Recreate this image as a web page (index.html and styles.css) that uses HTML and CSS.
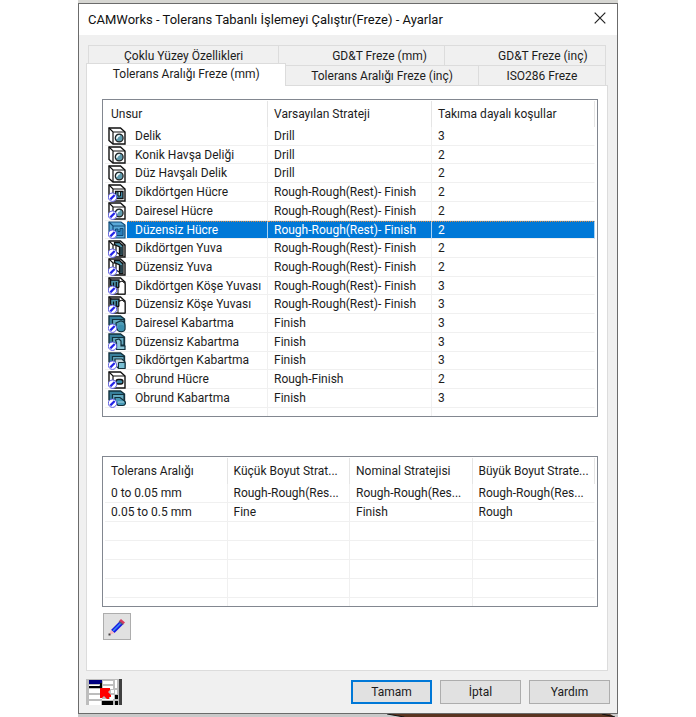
FILE: index.html
```
<!DOCTYPE html>
<html lang="tr">
<head>
<meta charset="utf-8">
<title>CAMWorks - Ayarlar</title>
<link rel="stylesheet" href="styles.css">
</head>
<body>
<svg class="defs" aria-hidden="true">
  <symbol id="box" viewBox="0 0 18 18">
    <path d="M1 1H12.5L17 5V17H5L1 13.5Z" fill="#fff" stroke="#111" stroke-width="1.4"/>
    <path d="M1 1L5 5H17M5 5V17" fill="none" stroke="#111" stroke-width="1.2"/>
  </symbol>
  <symbol id="tag" viewBox="0 0 18 18">
    <circle cx="4.5" cy="13.2" r="4.2" fill="#fff" stroke="#5a5ae0" stroke-width="1"/>
    <path d="M2.3 15.4L6.7 11" stroke="#2323e8" stroke-width="2.2"/>
  </symbol>
  <symbol id="teal" viewBox="0 0 18 18">
    <path d="M1 1H12.5L16.5 4V13H5L1 10Z" fill="#377f9b" stroke="#12303c" stroke-width="1.4"/>
    <path d="M4.5 4.5H16V12H4.5Z" fill="#65aac1" stroke="#12303c" stroke-width="1.2"/>
  </symbol>
  <symbol id="hole" viewBox="0 0 18 18">
    <use href="#box"/>
    <circle cx="11.2" cy="11" r="3.9" fill="#609bad" stroke="#222" stroke-width="1.3"/>
    <path d="M9 11.8A2.5 2.5 0 0 1 11.8 8.8" fill="none" stroke="#f2fafc" stroke-width="1.7"/>
  </symbol>
  <symbol id="rectpocket" viewBox="0 0 18 18">
    <use href="#box"/>
    <path d="M7.5 7.5H15V14.5H7.5Z" fill="#438aa6" stroke="#111" stroke-width="1.3"/>
    <path d="M10 8V12H12.5V8" fill="#b6dbe6" stroke="#111"/>
    <use href="#tag"/>
  </symbol>
  <symbol id="roundpocket" viewBox="0 0 18 18"><use href="#hole"/><use href="#tag"/></symbol>
  <symbol id="irrpocket" viewBox="0 0 18 18">
    <path d="M1 1H13L17 4V17H5L1 13.5Z" fill="#5aa9d8" stroke="#124a76" stroke-width="1.2"/>
    <path d="M1 1L5 5H17M5 5V17" fill="none" stroke="#124a76" stroke-width="1.2"/>
    <path d="M7.5 8H10V10.5H12V7.5H15V14.5H7.5Z" fill="#2a7fbb" stroke="#124a76"/>
    <use href="#tag"/>
  </symbol>
  <symbol id="slot" viewBox="0 0 18 18">
    <use href="#box"/>
    <path d="M6.5 2.5H11.5L15 6V15.5H11.5V7L6.5 4.5Z" fill="#4c91a9" stroke="#111" stroke-width="1.3"/>
    <path d="M8 5.5V12L11 14M13 7V14.5" fill="none" stroke="#111" stroke-width="1.2"/>
    <use href="#tag"/>
  </symbol>
  <symbol id="corner" viewBox="0 0 18 18">
    <use href="#box"/>
    <path d="M2.5 3H11V10.5H5.5L2.5 8Z" fill="#4991aa" stroke="#111" stroke-width="1.4"/>
    <path d="M5.5 5.5V10M8.3 5V10" stroke="#111" stroke-width="1.2"/>
    <path d="M11 5.5L14 4L17 6.5V17H10V10.5H11Z" fill="#fff" stroke="#111"/>
    <use href="#tag"/>
  </symbol>
  <symbol id="roundboss" viewBox="0 0 18 18">
    <use href="#teal"/>
    <path d="M8 8L11 6.5A4 4 0 0 1 17 10V14.5A4 3 0 0 1 10 15.5L8.5 13Z" fill="#4e9cb7" stroke="#12303c" stroke-width="1.2"/>
    <circle cx="13" cy="13" r="3.2" fill="#3b8fae"/>
    <use href="#tag"/>
  </symbol>
  <symbol id="irrboss" viewBox="0 0 18 18">
    <use href="#teal"/>
    <path d="M7.5 7L11 6L13 8V13H17V16.5H8.5V10Z" fill="#8cc6d8" stroke="#12303c" stroke-width="1.2"/>
    <use href="#tag"/>
  </symbol>
  <symbol id="rectboss" viewBox="0 0 18 18">
    <use href="#teal"/>
    <path d="M7 7H14L17 10V16.5H10.5L7 13Z" fill="#c9d7db" stroke="#12303c" stroke-width="1.2"/>
    <path d="M10.5 10.5H17V16.5H10.5Z" fill="#78bed3" stroke="#12303c"/>
    <use href="#tag"/>
  </symbol>
  <symbol id="obpocket" viewBox="0 0 18 18">
    <use href="#box"/>
    <rect x="8" y="8.5" width="7" height="4.5" rx="2.2" fill="#3c8ca9" stroke="#111" stroke-width="1.3"/>
    <use href="#tag"/>
  </symbol>
  <symbol id="obboss" viewBox="0 0 18 18">
    <use href="#teal"/>
    <path d="M7 7.5H12L16.5 11A2.5 2.5 0 0 1 15 15.5H10L7 12Z" fill="#4698b5" stroke="#12303c" stroke-width="1.2"/>
    <path d="M10 12H16" stroke="#a9d6e3"/>
    <use href="#tag"/>
  </symbol>
</svg>

<div class="desktop">
<main class="dialog">
  <header class="titlebar">
    <h1>CAMWorks - Tolerans Tabanlı İşlemeyi Çalıştır(Freze) - Ayarlar</h1>
    <button class="close" aria-label="Kapat"><svg viewBox="0 0 12 12"><path d="M.7.7L11.3 11.3M11.3.7L.7 11.3" stroke="#222" stroke-width="1.2"/></svg></button>
  </header>

  <div class="content">
    <div class="tabs" role="tablist">
      <div class="tabrow back">
        <button role="tab">Çoklu Yüzey Özellikleri</button>
        <button role="tab">GD&amp;T Freze (mm)</button>
        <button role="tab">GD&amp;T Freze (inç)</button>
      </div>
      <div class="tabrow front">
        <button role="tab" class="active" aria-selected="true">Tolerans Aralığı Freze (mm)</button>
        <button role="tab">Tolerans Aralığı Freze (inç)</button>
        <button role="tab">ISO286 Freze</button>
      </div>
    </div>

    <section class="panel">
      <div class="listbox">
        <table class="features">
          <colgroup><col class="c-icon"><col class="c-name"><col class="c-strategy"><col></colgroup>
          <thead><tr><th colspan="2">Unsur</th><th>Varsayılan Strateji</th><th>Takıma dayalı koşullar</th></tr></thead>
          <tbody>
            <tr><td class="ic"><svg><use href="#hole"/></svg></td><td>Delik</td><td>Drill</td><td>3</td></tr>
            <tr><td class="ic"><svg><use href="#hole"/></svg></td><td>Konik Havşa Deliği</td><td>Drill</td><td>2</td></tr>
            <tr><td class="ic"><svg><use href="#hole"/></svg></td><td>Düz Havşalı Delik</td><td>Drill</td><td>2</td></tr>
            <tr><td class="ic"><svg><use href="#rectpocket"/></svg></td><td>Dikdörtgen Hücre</td><td>Rough-Rough(Rest)- Finish</td><td>2</td></tr>
            <tr><td class="ic"><svg><use href="#roundpocket"/></svg></td><td>Dairesel Hücre</td><td>Rough-Rough(Rest)- Finish</td><td>2</td></tr>
            <tr class="selected"><td class="ic"><svg><use href="#irrpocket"/></svg></td><td>Düzensiz Hücre</td><td>Rough-Rough(Rest)- Finish</td><td>2</td></tr>
            <tr><td class="ic"><svg><use href="#slot"/></svg></td><td>Dikdörtgen Yuva</td><td>Rough-Rough(Rest)- Finish</td><td>2</td></tr>
            <tr><td class="ic"><svg><use href="#slot"/></svg></td><td>Düzensiz Yuva</td><td>Rough-Rough(Rest)- Finish</td><td>2</td></tr>
            <tr><td class="ic"><svg><use href="#corner"/></svg></td><td>Dikdörtgen Köşe Yuvası</td><td>Rough-Rough(Rest)- Finish</td><td>3</td></tr>
            <tr><td class="ic"><svg><use href="#corner"/></svg></td><td>Düzensiz Köşe Yuvası</td><td>Rough-Rough(Rest)- Finish</td><td>3</td></tr>
            <tr><td class="ic"><svg><use href="#roundboss"/></svg></td><td>Dairesel Kabartma</td><td>Finish</td><td>3</td></tr>
            <tr><td class="ic"><svg><use href="#irrboss"/></svg></td><td>Düzensiz Kabartma</td><td>Finish</td><td>3</td></tr>
            <tr><td class="ic"><svg><use href="#rectboss"/></svg></td><td>Dikdörtgen Kabartma</td><td>Finish</td><td>3</td></tr>
            <tr><td class="ic"><svg><use href="#obpocket"/></svg></td><td>Obrund Hücre</td><td>Rough-Finish</td><td>2</td></tr>
            <tr><td class="ic"><svg><use href="#obboss"/></svg></td><td>Obrund Kabartma</td><td>Finish</td><td>3</td></tr>
            <tr class="rest"><td class="ic"></td><td></td><td></td><td></td></tr>
          </tbody>
        </table>
      </div>

      <div class="listbox">
        <table class="ranges">
          <thead><tr><th>Tolerans Aralığı</th><th>Küçük Boyut Strat...</th><th>Nominal Stratejisi</th><th>Büyük Boyut Strate...</th></tr></thead>
          <tbody>
            <tr><td>0 to 0.05 mm</td><td>Rough-Rough(Res...</td><td>Rough-Rough(Res...</td><td>Rough-Rough(Res...</td></tr>
            <tr><td>0.05 to 0.5 mm</td><td>Fine</td><td>Finish</td><td>Rough</td></tr>
            <tr><td></td><td></td><td></td><td></td></tr>
            <tr><td></td><td></td><td></td><td></td></tr>
            <tr><td></td><td></td><td></td><td></td></tr>
            <tr><td></td><td></td><td></td><td></td></tr>
            <tr class="rest"><td></td><td></td><td></td><td></td></tr>
          </tbody>
        </table>
      </div>

      <button class="edit" aria-label="Düzenle"><svg viewBox="0 0 18 18">
        <path d="M3 12L12 3L15.5 6L6.5 15Z" fill="#1717e6"/>
        <path d="M5 13L13.5 4.5" stroke="#3c8cf0" stroke-width="1.6"/>
        <path d="M11 3L13 1L17 4.5L15 6.5Z" fill="#d8385f"/><path d="M11 3.5L15 6.5" stroke="#555a78" stroke-width="1.5"/>
        <path d="M3 12L1 17L6.5 15Z" fill="#f3b6bd"/><path d="M.5 15.5H2.5V17.5H.5Z" fill="#444"/>
      </svg></button>
    </section>

    <footer class="footer">
      <svg class="logo" viewBox="0 0 36 26" aria-hidden="true">
        <path d="M0 0H35V26H0Z" fill="#bdbdbd"/>
        <path d="M3 6H13V7H3ZM3 10H14V14H3ZM3 16H16V20H3ZM3 22H15V26H3ZM17 2H27V5H17ZM17 7H27V10H17ZM25 11H28V14H25ZM24 16H28V20H24ZM29 1H31V9H29ZM29 11H31V15H29ZM16 20H27V21H16Z" fill="#fff"/>
        <path d="M3 1H16V5H3Z" fill="#000080"/>
        <path d="M3 7H14V4H16V9H3ZM16 22H27V26H16ZM29 16H32V20H29ZM29 22H32V26H29Z" fill="#000"/>
        <path d="M33 0H36V26H33Z" fill="#404040"/>
        <path d="M14 9H24V11L22 13L25 16V18H23V20H21L18 17L16 19H14Z" fill="#f00"/>
      </svg>
      <div class="actions">
        <button class="default">Tamam</button>
        <button>İptal</button>
        <button>Yardım</button>
      </div>
    </footer>
  </div>
</main>
<svg class="edge" viewBox="0 0 538 3" preserveAspectRatio="none" aria-hidden="true"><path d="M0 0H538V3H0Z" fill="#c9c9c9"/><path d="M308 0H530L535 3H325Z" fill="#5a3420"/><path d="M308 0L325 3M522 0L535 3" stroke="#111"/></svg>
</div>
</body>
</html>
```
FILE: styles.css
```
* { box-sizing: border-box; }

body {
  margin: 0;
  background: #fff;
  color: #1c1c1c;
  font: 12px/16px Roboto, "Liberation Sans", sans-serif;
}

button { font: inherit; color: inherit; padding: 0; }

.defs { display: none; }

.desktop {
  display: flex;
  flex-direction: column;
  min-height: 100vh;
  margin: 0 78px;
  border-top: 3px solid #d6d6d2;
}

.dialog {
  flex: 1;
  display: flex;
  flex-direction: column;
  border: 1px solid #6b6b6b;
  background: #f0f0f0;
}

.edge { display: block; width: 100%; height: 3px; }

.titlebar {
  display: flex;
  align-items: center;
  justify-content: space-between;
  height: 31px;
  padding: 0 11px 0 9px;
  background: #fff;
}

.titlebar h1 {
  margin: 0;
  font: 13px/16px Roboto, "Noto Sans", sans-serif;
  color: #111;
}

.close { width: 12px; height: 12px; margin-bottom: 4px; border: 0; background: none; }
.close svg { display: block; }

.content {
  flex: 1;
  display: flex;
  flex-direction: column;
  padding: 10px 9px 0 7px;
}

.tabrow { display: grid; }
.tabrow button {
  height: 20px;
  border: 1px solid #dcdcdc;
  border-width: 1px 1px 0 0;
  background: #f0f0f0;
}
.back { grid-template-columns: 191fr 165fr 161fr; margin: 0 2px; }
.back button:first-child { border-left-width: 1px; }
.back button:nth-child(n+2) { padding-left: 36px; }
.front { grid-template-columns: 200fr 192fr 127fr; margin-right: 2px; }
.front .active {
  height: 23px;
  margin: -2px 0 -1px;
  padding-bottom: 2px;
  border-left-width: 1px;
  background: #fff;
  position: relative;
}

.panel {
  flex: 1;
  padding: 13px 9px 0 15px;
  border: 1px solid #dcdcdc;
  background: #fff;
}

.listbox {
  margin-bottom: 39px;
  padding: 1px 2px 0;
  border: 1px solid #828790;
}
.listbox + .listbox { margin-bottom: 6px; }

table { width: 100%; table-layout: fixed; border-collapse: separate; border-spacing: 0; }
.features { height: 315px; }
.ranges { height: 148px; }
.c-icon { width: 22px; }
.c-name { width: 141px; }
.c-strategy { width: 164px; }

th {
  height: 26px;
  padding: 0 6px;
  border-right: 1px solid #e5e5e5;
  text-align: left;
  font-weight: normal;
  white-space: nowrap;
}
td {
  padding: 0 6px;
  border-right: 1px solid #f0f0f0;
  border-bottom: 1px solid #f0f0f0;
  line-height: 16px;
  white-space: nowrap;
}
td:last-child { border-right-color: transparent; }
.ranges td { height: 19px; }
.features td:nth-child(2) { padding-left: 8px; }
td.ic { padding: 0 0 0 3px; border-right: 0; }
.ic svg { display: block; width: 18px; height: 18px; margin-bottom: -1px; }
.features .rest td, .ranges .rest td { height: 8px; border-bottom: 0; }

.selected td:not(.ic) {
  background: #0078d7;
  color: #fff;
  border-right-color: #a9d3f3;
  border-top: 1px dotted #d88a45;
}

.edit {
  display: grid;
  place-items: center;
  width: 28px;
  height: 27px;
  margin-left: 1px;
  border: 1px solid #adadad;
  background: #e1e1e1;
}
.edit svg { width: 18px; height: 18px; }

.footer {
  display: flex;
  justify-content: space-between;
  align-items: center;
  height: 42px;
  margin-right: -2px;
}
.logo { width: 36px; height: 26px; }
.actions { display: flex; gap: 8px; }
.actions button {
  width: 81px;
  height: 24px;
  border: 1px solid #adadad;
  background: #e1e1e1;
}
.actions .default { border: 2px solid #0078d7; }
```
